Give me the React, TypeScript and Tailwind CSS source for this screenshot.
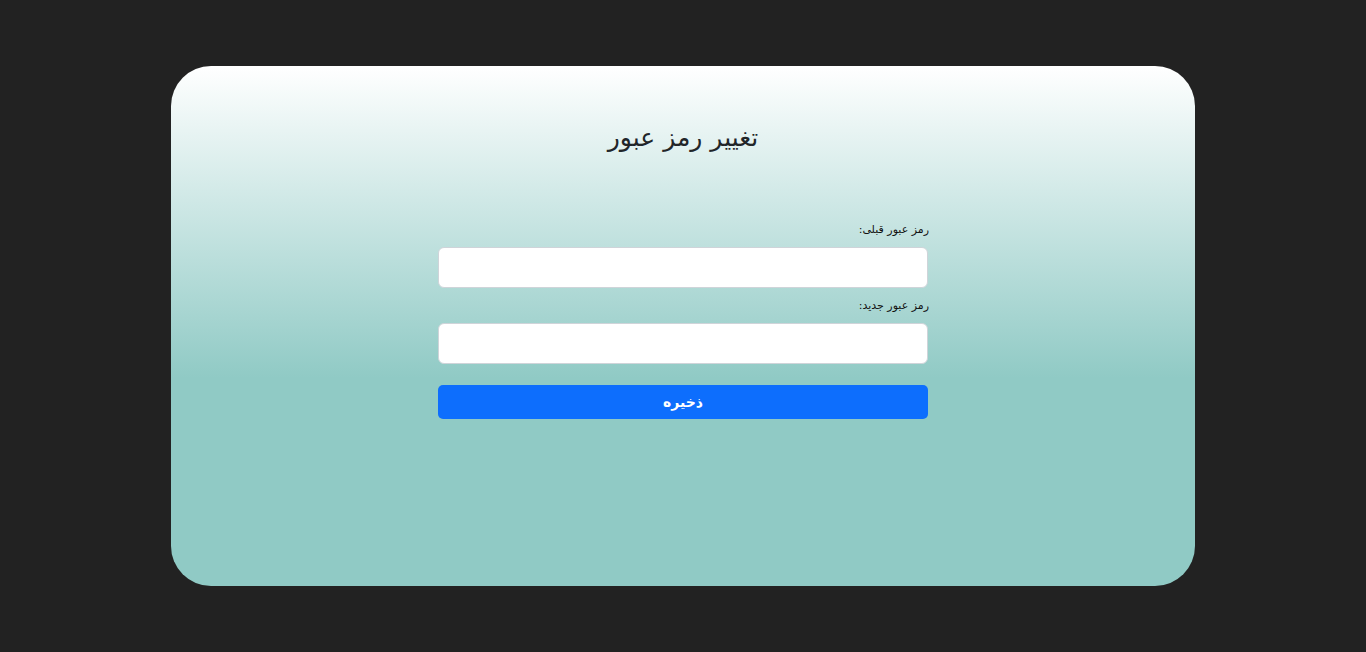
export default function App() {
  return (
    <div
      dir="rtl"
      className="min-h-[652px] w-full bg-[#222222] flex justify-center pt-[66px]"
      style={{ fontFamily: '"DejaVu Sans", "Noto Sans", sans-serif' }}
    >
      <div className="w-[1024px] h-[520px] rounded-[40px] bg-[linear-gradient(to_bottom,#ffffff_0%,#90cac5_60%,#90cac5_100%)] flex flex-col items-center">
        <h1 className="mt-[52px] text-[25px] leading-[40px] font-normal text-[#212529]">تغییر رمز عبور</h1>
        <form className="w-[490px] mt-[64px] flex flex-col" onSubmit={(e) => e.preventDefault()}>
          <label className="text-[11px] leading-[16px] text-[#111] mr-[-1px]">رمز عبور قبلی:</label>
          <input
            type="password"
            className="mt-[9px] h-[41px] w-full rounded-[6px] border border-[#cfd4d9] bg-white outline-none"
          />
          <label className="mt-[10px] text-[11px] leading-[16px] text-[#111] mr-[-1px]">رمز عبور جدید:</label>
          <input
            type="password"
            className="mt-[9px] h-[41px] w-full rounded-[6px] border border-[#cfd4d9] bg-white outline-none"
          />
          <button
            type="submit"
            className="mt-[21px] h-[34px] w-full rounded-[5px] bg-[#0d6efd] text-white text-[14px] font-semibold"
          >
            ذخیره
          </button>
        </form>
      </div>
    </div>
  );
}
